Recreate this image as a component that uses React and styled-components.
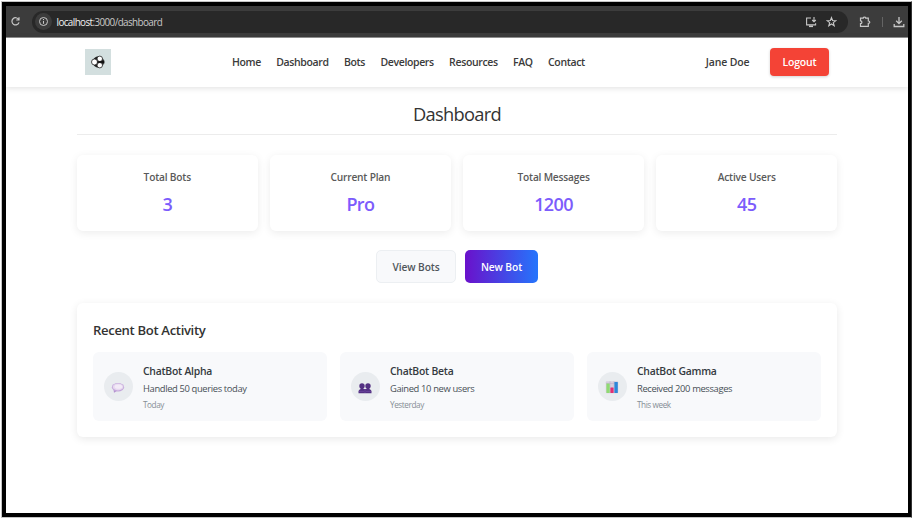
import React from "react";
import styled, { createGlobalStyle } from "styled-components";

const GlobalStyle = createGlobalStyle`
  *, *::before, *::after { box-sizing: border-box; }
  body { margin: 0; background: #fff; overflow: hidden; }
  h1, h2, h3, p { margin: 0; font-weight: inherit; }
  button { font: inherit; cursor: pointer; }
  svg { display: block; flex: none; }
`;

const Page = styled.div`
  width: 912px;
  height: 519px;
  padding: 1px 0 1px 1px;
  font-family: "Open Sans", "Noto Sans", sans-serif;
  color: #333;
`;

const Frame = styled.div`
  height: 517px;
  border: 1px solid #c4c4c4;
  border-right-color: #333;
`;

const Screen = styled.div`
  height: 515px;
  border: solid #000;
  border-width: 4px 3px 4px 4px;
  display: flex;
  flex-direction: column;
`;

const BrowserBar = styled.div`
  flex: none;
  height: 32px;
  background: #3c3c3c;
  border-bottom: 1px solid #929292;
  display: flex;
  align-items: center;
  padding: 0 2px 0 4px;
  color: #c7c7c7;
`;

const AddressBar = styled.div`
  width: 816px;
  height: 22px;
  margin-left: 11px;
  padding: 0 11px 0 3px;
  border-radius: 11px;
  background: #282828;
  display: flex;
  align-items: center;
`;

const SiteInfo = styled.span`
  width: 17px;
  height: 17px;
  border-radius: 50%;
  background: #3c3c3c;
  display: grid;
  place-items: center;
`;

const Url = styled.span`
  flex: 1;
  margin-left: 4.5px;
  font-size: 9.9px;
  letter-spacing: -0.6px;
  line-height: 14px;
  color: #c9c9c9;
  b { font-weight: 400; color: #f1f1f1; }
`;

const AddressIcons = styled.span`
  display: flex;
  gap: 9px;
`;

const BarTools = styled.span`
  margin-left: 11px;
  display: flex;
  align-items: center;
`;

const BarDivider = styled.i`
  width: 1px;
  height: 10px;
  margin: 0 10px 0 11px;
  background: #646464;
`;

const Nav = styled.header`
  flex: none;
  height: 49px;
  padding: 0 79px 2px 79px;
  display: flex;
  align-items: center;
  background: #fff;
  box-shadow: 0 1px 6px rgba(0, 0, 0, 0.13);
`;

const Logo = styled.span`
  width: 26px;
  height: 26px;
  background: #d3dfdf;
  display: grid;
  place-items: center;
`;

const Links = styled.nav`
  display: flex;
  gap: 15.3px;
  margin-left: 121px;
`;

const NavText = styled.span`
  font-size: 10.5px;
  font-weight: 600;
  line-height: 16px;
  letter-spacing: ${(p) => (p.$loose ? "-0.15px" : "-0.36px")};
  white-space: nowrap;
  color: #3b3b3b;
`;

const Account = styled.div`
  margin-left: auto;
  display: flex;
  align-items: center;
  gap: 20.5px;
`;

const LogoutButton = styled.button`
  width: 59px;
  height: 28px;
  padding: 0;
  border: 0;
  border-radius: 4px;
  background: #f44336;
  color: #fff;
  font-size: 10.5px;
  font-weight: 600;
  letter-spacing: -0.2px;
  box-shadow: 0 1px 3px rgba(0, 0, 0, 0.18);
`;

const Main = styled.main`
  flex: 1;
  width: 760px;
  margin: 0 0 0 71px;
`;

const PageTitle = styled.h1`
  height: 48px;
  padding-top: 14px;
  border-bottom: 1px solid #ececec;
  text-align: center;
  font-size: 18.3px;
  font-weight: 400;
  line-height: 26px;
  letter-spacing: -0.68px;
  color: #333;
`;

const Stats = styled.section`
  display: grid;
  grid-template-columns: repeat(4, 1fr);
  gap: 12.6px;
  margin-top: 20px;
`;

const StatCard = styled.article`
  height: 76px;
  padding-top: 14px;
  border-radius: 6px;
  background: #fff;
  box-shadow: 0 2px 8px rgba(0, 0, 0, 0.08);
  text-align: center;
`;

const StatLabel = styled.h3`
  font-size: 10.2px;
  font-weight: 600;
  line-height: 16px;
  letter-spacing: -0.2px;
  color: #5a5a5a;
`;

const StatValue = styled.p`
  margin-top: 6px;
  font-size: 18px;
  font-weight: 600;
  line-height: 26px;
  letter-spacing: -0.6px;
  color: #7c5cfc;
`;

const Actions = styled.div`
  display: flex;
  justify-content: center;
  gap: 9px;
  margin-top: 19px;
`;

const ActionButton = styled.button`
  width: ${(p) => (p.$primary ? 73 : 80)}px;
  height: 33px;
  padding: 0;
  border: ${(p) => (p.$primary ? "0" : "1px solid #eceff2")};
  border-radius: 5px;
  background: ${(p) => (p.$primary ? "linear-gradient(90deg, #6a11cb, #2575fc)" : "#f8f9fb")};
  color: ${(p) => (p.$primary ? "#fff" : "#50565b")};
  font-size: 10.2px;
  font-weight: 600;
  letter-spacing: -0.08px;
`;

const Activity = styled.section`
  height: 134px;
  margin-top: 20px;
  padding: 17px 16px;
  border-radius: 6px;
  background: #fff;
  box-shadow: 0 2px 9px rgba(0, 0, 0, 0.09);
`;

const ActivityTitle = styled.h2`
  font-size: 13.1px;
  font-weight: 600;
  line-height: 20px;
  letter-spacing: -0.34px;
  color: #333;
`;

const ActivityList = styled.div`
  display: grid;
  grid-template-columns: repeat(3, 1fr);
  gap: 13px;
  margin-top: 12px;
`;

const ActivityItem = styled.article`
  height: 69px;
  padding-left: 10.5px;
  border-radius: 6px;
  background: #f8f9fb;
  display: flex;
  align-items: center;
  gap: 10px;
`;

const Avatar = styled.span`
  width: 29.5px;
  height: 29.5px;
  border-radius: 50%;
  background: #e9ecef;
  display: grid;
  place-items: center;
`;

const BotName = styled.h3`
  font-size: 10.4px;
  font-weight: 600;
  line-height: 16px;
  letter-spacing: -0.24px;
  color: #343a40;
`;

const BotEvent = styled.p`
  margin-top: 3px;
  font-size: 9.4px;
  line-height: 14px;
  letter-spacing: -0.36px;
  color: #495057;
`;

const BotTime = styled.p`
  margin-top: 3px;
  font-size: 8.2px;
  line-height: 12px;
  letter-spacing: -0.42px;
  color: #868e96;
`;

const ReloadIcon = () => (
  <svg width="11" height="11" viewBox="0 0 11 11" fill="none" stroke="currentColor" strokeWidth="1.2">
    <path d="M8.7 3.6A3.6 3.6 0 1 0 9 6.3M9 1.3V4H6.2" />
  </svg>
);

const InfoIcon = () => (
  <svg width="11" height="11" viewBox="0 0 11 11" fill="none" stroke="currentColor">
    <circle cx="5.5" cy="5.5" r="4" />
    <path d="M5.5 5V7.8M5.5 3V4.1" />
  </svg>
);

const InstallIcon = () => (
  <svg width="12" height="12" viewBox="0 0 12 12" fill="none" stroke="currentColor" strokeWidth="1.1">
    <path d="M6 2H1.6V8.9H10.6V7.2M9 1V5.5M7.2 4L9 5.7L10.8 4" />
    <path d="M4 10.3H8" strokeWidth="1.6" />
  </svg>
);

const StarIcon = () => (
  <svg width="11" height="12" viewBox="0 0 11 12" fill="none" stroke="currentColor" strokeWidth="1.1">
    <path d="M5.5 1.6L6.6 4.5L9.8 4.7L7.3 6.6L8.2 9.8L5.5 8L2.8 9.8L3.7 6.6L1.2 4.7L4.4 4.5Z" />
  </svg>
);

const PuzzleIcon = () => (
  <svg width="12" height="12" viewBox="0 0 12 12" fill="none" stroke="currentColor" strokeWidth="1.2">
    <path d="M1.5 2.1H4.3C4.3.7 6.7.7 6.7 2.1H9.3V5C11.3 5 11.3 7.4 9.3 7.4V10.3H1.5V7.6C3.4 7.5 3.4 4.9 1.5 4.8Z" />
  </svg>
);

const DownloadIcon = () => (
  <svg width="12" height="12" viewBox="0 0 12 12" fill="none" stroke="currentColor" strokeWidth="1.3">
    <path d="M6 1V7.4M3.2 4.8L6 7.6L8.8 4.8M1.2 8V10.5H10.8V8" />
  </svg>
);

const BallLogo = () => (
  <svg width="14" height="14" viewBox="0 0 14 14">
    <circle cx="7.4" cy="7" r="5.7" fill="#222" />
    <g fill="#fff" stroke="#222" strokeWidth=".8">
      <circle cx="3.5" cy="7" r="3" />
      <circle cx="8.8" cy="3.8" r="2.7" />
      <circle cx="8.8" cy="10.2" r="2.7" />
    </g>
    <path d="M6.5 6.4L11 6.1L13.4 5.4V8.6L11 7.8L6.5 7.7Z" fill="#111" />
  </svg>
);

const SpeechIcon = () => (
  <svg width="14" height="14" viewBox="0 0 14 14">
    <path d="M2.6 10L3 12.8L6.2 10.8Z" fill="#b391cf" />
    <ellipse cx="7" cy="7.2" rx="6.1" ry="4.2" fill="#c3a5da" />
    <ellipse cx="7" cy="6.9" rx="5.4" ry="3.5" fill="#e6d8ef" />
    <ellipse cx="7.4" cy="6.7" rx="3.8" ry="2.1" fill="#f3ebf7" />
  </svg>
);

const PeopleIcon = () => (
  <svg width="14" height="14" viewBox="0 0 14 14" fill="#533082">
    <ellipse cx="4" cy="6" rx="2.7" ry="2.8" />
    <ellipse cx="10" cy="6" rx="2.7" ry="2.8" />
    <path d="M2.6 7H5.4V10H2.6ZM8.6 7H11.4V10H8.6Z" />
    <path d="M.5 13.3V11.4C.5 10 2 9.3 3.2 9.1H10.8C12 9.3 13.5 10 13.5 11.4V13.3Z" />
    <path d="M7 9V13M1 11.4H6M8 11.4H13" stroke="#7650ab" strokeWidth=".6" />
  </svg>
);

const ChartIcon = () => (
  <svg width="14" height="14" viewBox="0 0 14 14">
    <rect x=".8" y="1.2" width="12.4" height="12" rx="1" fill="#d5cddd" />
    <path d="M1 3.5H13M5 1.2V13M9 1.2V13" stroke="#b9adc6" strokeWidth=".5" />
    <rect x="1.4" y="3.5" width="3.3" height="9.5" rx=".5" fill="#8fdb72" />
    <rect x="5.4" y="7.4" width="3.2" height="5.6" rx=".5" fill="#e22e72" />
    <rect x="9.4" y="2" width="3.4" height="11" rx=".5" fill="#2c87d9" />
  </svg>
);

const links = ["Home", "Dashboard", "Bots", "Developers", "Resources", "FAQ", "Contact"];

const stats = [
  ["Total Bots", "3"],
  ["Current Plan", "Pro"],
  ["Total Messages", "1200"],
  ["Active Users", "45"],
];

const activity = [
  { name: "ChatBot Alpha", event: "Handled 50 queries today", time: "Today", Icon: SpeechIcon },
  { name: "ChatBot Beta", event: "Gained 10 new users", time: "Yesterday", Icon: PeopleIcon },
  { name: "ChatBot Gamma", event: "Received 200 messages", time: "This week", Icon: ChartIcon },
];

export default function App() {
  return (
    <Page>
      <GlobalStyle />
      <Frame>
        <Screen>
          <BrowserBar>
            <ReloadIcon />
            <AddressBar>
              <SiteInfo><InfoIcon /></SiteInfo>
              <Url><b>localhost</b>:3000/dashboard</Url>
              <AddressIcons><InstallIcon /><StarIcon /></AddressIcons>
            </AddressBar>
            <BarTools><PuzzleIcon /><BarDivider /><DownloadIcon /></BarTools>
          </BrowserBar>
          <Nav>
            <Logo><BallLogo /></Logo>
            <Links>
              {links.map((label) => <NavText key={label}>{label}</NavText>)}
            </Links>
            <Account>
              <NavText $loose>Jane Doe</NavText>
              <LogoutButton>Logout</LogoutButton>
            </Account>
          </Nav>
          <Main>
            <PageTitle>Dashboard</PageTitle>
            <Stats>
              {stats.map(([label, value]) => (
                <StatCard key={label}>
                  <StatLabel>{label}</StatLabel>
                  <StatValue>{value}</StatValue>
                </StatCard>
              ))}
            </Stats>
            <Actions>
              <ActionButton>View Bots</ActionButton>
              <ActionButton $primary>New Bot</ActionButton>
            </Actions>
            <Activity>
              <ActivityTitle>Recent Bot Activity</ActivityTitle>
              <ActivityList>
                {activity.map(({ name, event, time, Icon }) => (
                  <ActivityItem key={name}>
                    <Avatar><Icon /></Avatar>
                    <div>
                      <BotName>{name}</BotName>
                      <BotEvent>{event}</BotEvent>
                      <BotTime>{time}</BotTime>
                    </div>
                  </ActivityItem>
                ))}
              </ActivityList>
            </Activity>
          </Main>
        </Screen>
      </Frame>
    </Page>
  );
}
